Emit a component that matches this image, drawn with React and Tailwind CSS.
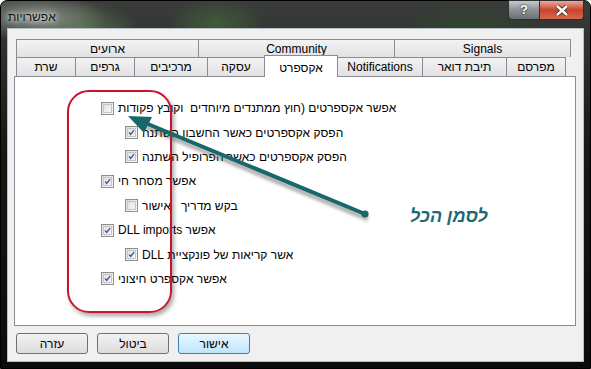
import React from "react";

const FONT = "font-['Liberation_Sans','DejaVu_Sans',sans-serif]";

const rowOne = [
  { name: "ארועים", w: "w-[183px]" },
  { name: "Community", w: "w-[197px]" },
  { name: "Signals", w: "w-[177px]" },
];

const rowTwo = [
  { name: "שרת", w: "w-[60px]" },
  { name: "גרפים", w: "w-[60px]" },
  { name: "מרכיבים", w: "w-[74px]" },
  { name: "עסקה", w: "w-[58px]" },
  { name: "אקספרט", w: "w-[74px]", active: true },
  { name: "Notifications", w: "w-[86px]" },
  { name: "תיבת דואר", w: "w-[85px]" },
  { name: "מפרסם", w: "w-[60px]" },
];

const options = [
  { text: "אפשר אקספרטים (חוץ ממתנדים מיוחדים  וקובץ פקודות", checked: false, sub: false },
  { text: "הפסק אקספרטים כאשר החשבון השתנה", checked: true, sub: true },
  { text: "הפסק אקספרטים כאשר הפרופיל השתנה", checked: true, sub: true },
  { text: "אפשר מסחר חי", checked: true, sub: false },
  { text: "בקש מדריך   אישור", checked: false, sub: true },
  { text: "אפשר DLL imports", checked: true, sub: false },
  { text: "אשר קריאות של פונקציית DLL", checked: true, sub: true },
  { text: "אפשר אקספרט חיצוני", checked: true, sub: false },
];

const Check = ({ checked }) => (
  <span className="w-[13px] h-[13px] border border-[#8e8f8f] bg-gradient-to-br from-[#dcdcdc] to-[#fbfbfb] flex items-center justify-center shrink-0">
    <span className="w-[9px] h-[9px] border border-[#c6c6c6] bg-gradient-to-br from-[#e2e2e2] to-[#f6f6f6] flex items-center justify-center">
      {checked && (
        <svg width="9" height="9" viewBox="0 0 9 9">
          <path d="M1.5 4.5 L3.5 7 L7.8 1.5" fill="none" stroke="#3c5a97" strokeWidth="1.8" />
        </svg>
      )}
    </span>
  </span>
);

const Button = ({ label, primary }) => (
  <button
    className={`w-[72px] h-[21px] rounded-[3px] border text-[12px] text-black ${
      primary
        ? "border-[#3c7fb1] bg-gradient-to-b from-[#eaf6fd] to-[#bee6fd]"
        : "border-[#707070] bg-gradient-to-b from-[#f2f2f2] to-[#dcdcdc]"
    }`}
  >
    {label}
  </button>
);

export default function App() {
  return (
    <div className={`relative w-[591px] h-[369px] overflow-hidden ${FONT}`}>
      <div className="w-full h-full rounded-t-[7px] border border-black bg-[radial-gradient(ellipse_70px_24px_at_35px_16px,#8a918a,transparent),radial-gradient(ellipse_60px_30px_at_80px_30px,#55704b,transparent),radial-gradient(ellipse_50px_25px_at_215px_22px,#3f5c3a,transparent),radial-gradient(ellipse_80px_30px_at_470px_35px,#2f4a2c,transparent),linear-gradient(180deg,#3a3d3a,#161816_40%,#0b0b0b)] flex flex-col">
        {/* title bar */}
        <div className="h-[27px] flex items-start justify-between shrink-0">
          <span className="pl-[7px] pt-[7px] text-[12px] text-[#111] [text-shadow:0_0_8px_#e8eee8,0_0_4px_#e8eee8]">
            אפשרויות
          </span>
          <div className="flex mr-[6px] -mt-px">
            <div className="w-[32px] h-[20px] rounded-bl-[4px] border border-[#2d2f30] bg-gradient-to-b from-[#c6cacc] via-[#8a9195] to-[#6a7275] flex items-center justify-center text-white font-bold text-[13px] [text-shadow:0_0_2px_#000]">
              ?
            </div>
            <div className="w-[44px] h-[20px] rounded-br-[4px] border border-l-0 border-[#2d2f30] bg-gradient-to-b from-[#e9a99c] via-[#c7432b] to-[#d76a4d] flex items-center justify-center">
              <svg width="14" height="11" viewBox="0 0 14 11">
                <path d="M2 1 L12 10 M12 1 L2 10" stroke="#2a2a2a" strokeWidth="4" />
                <path d="M2 1 L12 10 M12 1 L2 10" stroke="#fff" strokeWidth="2.4" />
              </svg>
            </div>
          </div>
        </div>

        {/* client area */}
        <div className="mx-[6px] h-[334px] bg-[#f0f0f0] border border-[#b9c0c5] flex flex-col pt-[10px]">
          <div className="pl-[8px] flex flex-col">
            <div className="flex">
              {rowOne.map((t) => (
                <div
                  key={t.name}
                  className={`${t.w} h-[18px] border border-b-0 border-[#898c95] bg-gradient-to-b from-[#f3f3f3] to-[#e2e2e2] flex items-center justify-center text-[12px] text-black -mr-px`}
                  dir="auto"
                >
                  {t.name}
                </div>
              ))}
            </div>
            <div className="flex items-end h-[19px] relative z-10">
              {rowTwo.map((t) =>
                t.active ? (
                  <div
                    key={t.name}
                    className={`${t.w} h-[22px] -mb-px border border-b-0 border-[#898c95] bg-white flex items-start pt-[3px] justify-center text-[12px] text-black -mr-px`}
                  >
                    {t.name}
                  </div>
                ) : (
                  <div
                    key={t.name}
                    className={`${t.w} h-[19px] border border-b-0 border-[#898c95] bg-gradient-to-b from-[#f3f3f3] to-[#e2e2e2] flex items-center justify-center text-[12px] text-black -mr-px`}
                  >
                    {t.name}
                  </div>
                )
              )}
            </div>
          </div>

          {/* panel */}
          <div className="ml-[6px] w-[562px] h-[250px] bg-white border border-[#898c95] pt-[19px] flex flex-col">
            {options.map((o) => (
              <div
                key={o.text}
                className={`h-[24.4px] flex items-center gap-[4px] ${o.sub ? "pl-[110px]" : "pl-[86px]"}`}
              >
                <Check checked={o.checked} />
                <span dir="rtl" className="text-[12px] text-black whitespace-pre">
                  {o.text}
                </span>
              </div>
            ))}
          </div>

          <div className="flex gap-[9px] pl-[8px] pt-[7px]">
            <Button label="עזרה" />
            <Button label="ביטול" />
            <Button label="אישור" primary />
          </div>
        </div>
      </div>

      {/* annotation: red frame */}
      <div className="absolute left-[67px] top-[90px] w-[105px] h-[223px] rounded-[22px] border-2 border-[#c8152d] shadow-[2px_3px_4px_rgba(0,0,0,0.35)]" />

      {/* annotation: arrow */}
      <svg className="absolute left-0 top-0 pointer-events-none" width="591" height="369">
        <defs>
          <filter id="sh" x="-10%" y="-10%" width="120%" height="130%">
            <feGaussianBlur stdDeviation="1.6" />
          </filter>
        </defs>
        <g filter="url(#sh)" opacity="0.45">
          <line x1="368" y1="219" x2="146" y2="127" stroke="#555" strokeWidth="5" />
        </g>
        <line x1="365" y1="214" x2="143" y2="122" stroke="#17676c" strokeWidth="4" />
        <polygon points="128,116 152,117 144,133" fill="#17676c" />
        <circle cx="365" cy="214" r="3.6" fill="#17676c" />
      </svg>

      <div
        dir="rtl"
        className="absolute left-[410px] top-[203px] text-[18px] font-bold italic text-[#1b6a73]"
      >
        לסמן הכל
      </div>
    </div>
  );
}
